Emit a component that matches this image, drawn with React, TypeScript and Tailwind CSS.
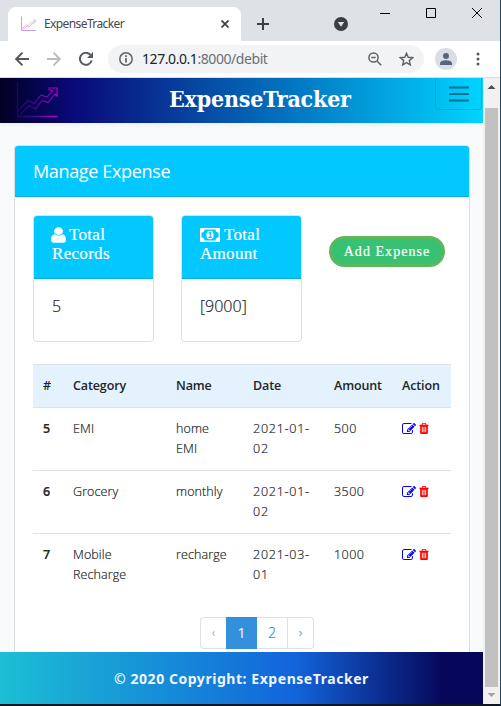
import React from "react";

const EDIT =
  "M888 1184l116-116-152-152-116 116v56h96v96h56zm440-720q-16-16-33 1l-350 350q-17 17-1 33t33-1l350-350q17-17 1-33zm80 594v190q0 119-84.5 203.5t-203.5 84.5h-832q-119 0-203.5-84.5t-84.5-203.5v-832q0-119 84.5-203.5t203.5-84.5h832q63 0 117 25 15 7 18 23 3 17-9 29l-49 49q-14 14-32 8-23-6-45-6h-832q-66 0-113 47t-47 113v832q0 66 47 113t113 47h832q66 0 113-47t47-113v-126q0-13 9-22l64-64q15-15 35-7t20 29zm-96-738l288 288-672 672h-288v-288zm444 132l-92 92-288-288 92-92q28-28 68-28t68 28l152 152q28 28 28 68t-28 68z";
const TRASH =
  "M704 1376v-704q0-14-9-23t-23-9h-64q-14 0-23 9t-9 23v704q0 14 9 23t23 9h64q14 0 23-9t9-23zm256 0v-704q0-14-9-23t-23-9h-64q-14 0-23 9t-9 23v704q0 14 9 23t23 9h64q14 0 23-9t9-23zm256 0v-704q0-14-9-23t-23-9h-64q-14 0-23 9t-9 23v704q0 14 9 23t23 9h64q14 0 23-9t9-23zm-544-992h448l-48-117q-7-9-17-11h-317q-10 2-17 11zm928 32v64q0 14-9 23t-23 9h-96v948q0 83-47 143.5t-113 60.5h-832q-66 0-113-58.5t-47-141.5v-952h-96q-14 0-23-9t-9-23v-64q0-14 9-23t23-9h309l70-167q15-37 54-63t79-26h320q40 0 79 26t54 63l70 167h309q14 0 23 9t9 23z";
const USER =
  "M1536 1399q0 109-62.5 187t-150.5 78h-854q-88 0-150.5-78t-62.5-187q0-85 8.5-160.5t31.5-152 58.5-131 94-89 134.5-34.5q131 128 313 128t313-128q76 0 134.5 34.5t94 89 58.5 131 31.5 152 8.5 160.5zm-256-887q0 159-112.5 271.5t-271.5 112.5-271.5-112.5-112.5-271.5 112.5-271.5 271.5-112.5 271.5 112.5 112.5 271.5z";

function ChartLogo() {
  return (
    <svg width="42" height="36" viewBox="0 0 42 36" fill="none" className="block">
      <defs>
        <linearGradient id="logo" gradientUnits="userSpaceOnUse" x1="0" y1="0" x2="42" y2="0">
          <stop offset="0" stopColor="#16085c" />
          <stop offset="0.45" stopColor="#45079a" />
          <stop offset="1" stopColor="#c800c4" />
        </linearGradient>
      </defs>
      <path d="M1.500 0V34.500H41.500" stroke="url(#logo)" strokeWidth="1.300" />
      <path
        d="M2 29L12 18.500L18.500 21.500L25 13L31 15L36.500 8.500L33 7.500V6H41V14L39 12L32 20.500L26 18.500L19.500 27L13 23.500L4 33"
        stroke="url(#logo)"
        strokeWidth="1.100"
      />
    </svg>
  );
}

function TabStrip() {
  return (
    <div className="flex h-[41px] items-end bg-[#dee1e6] pl-2">
      <div className="flex h-[34px] w-[233px] items-center rounded-t-lg bg-white pl-3 pr-3">
        <svg width="17" height="16" viewBox="0 0 17 16" fill="none">
          <path d="M1.500 0.500V14.500H16" stroke="#b9a5e6" />
          <path d="M2 13L6 8.500L8 10L11 6.500L15 5.500M3 13.500L7 10L9 11L12 8L15.500 6V4H13" stroke="#f0b4f0" strokeWidth="1" />
        </svg>
        <span className="ml-[7px] font-['Noto_Sans','Open_Sans',sans-serif] text-[12px] leading-4 tracking-[-0.600px] text-[#45494d]">ExpenseTracker</span>
        <svg className="ml-auto" width="8" height="8" viewBox="0 0 8 8" stroke="#3c4043" strokeWidth="1.700">
          <path d="M0.500 0.500L7.500 7.500M7.500 0.500L0.500 7.500" />
        </svg>
      </div>
      <svg className="mb-[11px] ml-4" width="12" height="12" viewBox="0 0 12 12" stroke="#3c4043" strokeWidth="2">
        <path d="M6 0V12M0 6H12" />
      </svg>
      <svg className="mb-[10px] ml-[65px]" width="14" height="14" viewBox="0 0 14 14">
        <circle cx="7" cy="7" r="7" fill="#3c4043" />
        <path d="M3.800 5H10.200L7 9.800Z" fill="#dee1e6" />
      </svg>
      <div className="ml-8 flex h-[41px] gap-9 pt-2">
        <svg width="10" height="10" stroke="#000"><path d="M0 5.500H10" /></svg>
        <svg width="10" height="10" stroke="#000" fill="none"><path d="M0.500 0.500H9.500V9.500H0.500Z" /></svg>
        <svg width="10" height="10" stroke="#000"><path d="M0 0L10 10M10 0L0 10" /></svg>
      </div>
    </div>
  );
}

function Toolbar() {
  return (
    <div className="flex h-[37px] items-center border-b border-[#dcdcdc] bg-white pl-[15px]">
      <svg width="14" height="14" viewBox="0 0 14 14" fill="none" stroke="#55595e" strokeWidth="1.900">
        <path d="M14 7H1.500M7.500 0.700L1.200 7L7.500 13.300" />
      </svg>
      <svg className="ml-[18px]" width="14" height="14" viewBox="0 0 14 14" fill="none" stroke="#babcbe" strokeWidth="1.900">
        <path d="M0 7H12.500M6.500 0.700L12.800 7L6.500 13.300" />
      </svg>
      <svg className="ml-[18px]" width="14" height="14" viewBox="0 0 14 14" fill="none" stroke="#55595e" strokeWidth="2">
        <path d="M12.700 8.500A6 6 0 1 1 11.300 2.700" />
        <path d="M14 0V6H8Z" fill="#55595e" stroke="none" />
      </svg>
      <div className="ml-[15px] flex h-7 w-[316px] items-center rounded-full bg-[#f1f3f4] pl-[11px] pr-[10px]">
        <svg width="14" height="14" viewBox="0 0 14 14" fill="none" stroke="#5f6368" strokeWidth="1.500">
          <circle cx="7" cy="7" r="6.200" />
          <path d="M7 6V10.500M7 3.300V4.900" strokeWidth="1.700" />
        </svg>
        <span className="ml-[9px] whitespace-nowrap font-['Noto_Sans','Open_Sans',sans-serif] text-[14px] leading-5 tracking-[-0.430px] text-[#6b7075]">
          <span className="text-[#202124]">127.0.0.1</span>:8000/debit
        </span>
        <svg className="ml-auto" width="14" height="14" viewBox="0 0 14 14" fill="none" stroke="#5f6368" strokeWidth="1.500">
          <circle cx="5.500" cy="5.500" r="4.600" />
          <path d="M9 9L13.200 13.200M3.300 5.500H7.700" />
        </svg>
        <svg className="ml-[17px]" width="15" height="14" viewBox="0 0 15 14" fill="none" stroke="#5f6368" strokeWidth="1.400">
          <path d="M7.500 1.300L9.200 5.300L13.600 5.700L10.300 8.600L11.300 12.900L7.500 10.600L3.700 12.900L4.700 8.600L1.400 5.700L5.800 5.300Z" />
        </svg>
      </div>
      <div className="ml-[11px] flex size-[22px] items-center justify-center rounded-full bg-[#dadde3]">
        <svg width="12" height="12" viewBox="0 0 12 12" fill="#5a6478">
          <circle cx="6" cy="3" r="3" />
          <path d="M0 12V10.300C0 8 4 7.200 6 7.200S12 8 12 10.300V12Z" />
        </svg>
      </div>
      <svg className="ml-[19px]" width="4" height="14" viewBox="0 0 4 14" fill="#55595e">
        <circle cx="2" cy="2" r="1.500" />
        <circle cx="2" cy="7" r="1.500" />
        <circle cx="2" cy="12" r="1.500" />
      </svg>
    </div>
  );
}

function Navbar() {
  return (
    <div className="flex h-[45px] shrink-0 items-start bg-[linear-gradient(90deg,#020024_0%,#090979_15%,#00d4ff_100%)] pl-4 shadow-[0_2px_4px_rgba(0,0,0,0.05)]">
      <div className="pt-1"><ChartLogo /></div>
      <h1 className="ml-[111px] w-[187px] whitespace-nowrap pt-1 font-['DejaVu_Serif_Condensed','DejaVu_Serif',serif] text-[23px] font-bold leading-[34px] tracking-[-0.200px] text-white [font-stretch:condensed]">
        ExpenseTracker
      </h1>
      <div className="ml-[79px] flex h-8 w-[47px] items-center justify-center rounded-b border border-t-0 border-[#00add8]">
        <svg width="20" height="16" viewBox="0 0 20 16" stroke="#036f91" strokeWidth="2">
          <path d="M0 1.500H20M0 8H20M0 14.500H20" />
        </svg>
      </div>
    </div>
  );
}

function Money() {
  return (
    <svg className="mr-1 inline-block align-[-1px]" width="20" height="14" viewBox="0 0 20 14">
      <path
        fill="#fff"
        fillRule="evenodd"
        d="M0 0H20V14H0ZM4.500 1.500A3 3 0 0 1 1.500 4.500V9.500A3 3 0 0 1 4.500 12.500H15.500A3 3 0 0 1 18.500 9.500V4.500A3 3 0 0 1 15.500 1.500Z"
      />
      <ellipse cx="10" cy="7" rx="3.600" ry="4.300" fill="#fff" />
      <path d="M8.500 5.500L10.300 4.300V9.300M8.300 9.300H11.900" fill="none" stroke="#03c8ff" strokeWidth="1.200" />
    </svg>
  );
}

function StatCard({ icon, first, second, value }: { icon: React.ReactNode; first: string; second: string; value: string }) {
  return (
    <div className="h-[127px] w-[121px] overflow-hidden rounded border border-[#dfdfdf]">
      <div className="h-[63px] border-b border-[#05b1e0] bg-[#03c8ff] pl-[18px] pt-[10px] font-['Liberation_Serif',serif] text-[17px] leading-[18px] tracking-[0.300px] text-white [-webkit-text-stroke:0.200px_white]">
        <div className="flex h-[18px] items-center whitespace-nowrap">{icon}<span>{first}</span></div>
        <div className="pt-px">{second}</div>
      </div>
      <div className="pl-[18px] pt-[15px] text-[16px] font-light leading-6 text-[#212529] [-webkit-text-stroke:0.200px_#212529]">{value}</div>
    </div>
  );
}

const rows = [
  ["5", ["EMI"], ["home", "EMI"], ["2021-01-", "02"], "500"],
  ["6", ["Grocery"], ["monthly"], ["2021-01-", "02"], "3500"],
  ["7", ["Mobile", "Recharge"], ["recharge"], ["2021-03-", "01"], "1000"],
] as [string, string[], string[], string[], string][];

const grid = "grid grid-cols-[30px_103px_77px_81px_68px_59px] border-t border-[#dee2e6] pl-[10px]";

function Lines({ items }: { items: string[] }) {
  return <div>{items.map((t) => <div key={t}>{t}</div>)}</div>;
}

function ExpenseTable() {
  return (
    <div className="mt-[22px] w-[418px] overflow-hidden text-[12.500px] leading-5 text-[#212529]">
      <div className={grid + " h-[43px] bg-[#e3f2fd] pt-[11px] font-semibold tracking-[-0.120px]"}>
        <div>#</div><div>Category</div><div>Name</div><div>Date</div><div>Amount</div><div>Action</div>
      </div>
      {rows.map(([id, cat, name, date, amount]) => (
        <div key={id} className={grid + " h-[63px] pt-[10.500px] font-light [-webkit-text-stroke:0.200px_#212529]"}>
          <div className="font-semibold">{id}</div>
          <div className="tracking-[0.100px]"><Lines items={cat} /></div>
          <div className="tracking-[0.100px]"><Lines items={name} /></div>
          <div className="tracking-[0.750px]"><Lines items={date} /></div>
          <div className="tracking-[0.450px]">{amount}</div>
          <div className="flex gap-[2px] pt-[3.500px]">
            <svg width="14" height="14" viewBox="0 0 1792 1792" fill="#0000ff"><path d={EDIT} /></svg>
            <svg width="12" height="13" viewBox="0 0 1792 1792" fill="#ff0000" preserveAspectRatio="none"><path d={TRASH} /></svg>
          </div>
        </div>
      ))}
    </div>
  );
}

function Pagination() {
  return (
    <div className="ml-[167px] mt-[21px] flex h-8 w-[114px] text-center text-[14px] font-light leading-[30px] text-[#3490dc]">
      <div className="w-[26px] rounded-l border border-r-0 border-[#dee2e6] text-[12px] text-[#6c757d]">‹</div>
      <div className="w-[31px] bg-[#3490dc] font-normal leading-8 text-white">1</div>
      <div className="w-[31px] border border-l-0 border-[#dee2e6] [-webkit-text-stroke:0.200px_#3490dc]">2</div>
      <div className="w-[26px] rounded-r border border-l-0 border-[#dee2e6] text-[12px] [-webkit-text-stroke:0.200px_#3490dc]">›</div>
    </div>
  );
}

function Scrollbar() {
  return (
    <div className="flex w-[17px] shrink-0 flex-col items-center bg-[#f1f1f1]">
      <svg width="17" height="30" viewBox="0 0 17 30"><path d="M4.500 11L8.500 7L12.500 11Z" fill="#505050" /></svg>
      <div className="h-[579px] w-[13px] bg-[#c1c1c1]" />
      <svg width="17" height="17" viewBox="0 0 17 17"><path d="M4.500 6L8.500 10L12.500 6Z" fill="#a3a3a3" /></svg>
    </div>
  );
}

export default function App() {
  return (
    <div className="h-[706px] w-[501px] overflow-hidden border-b-2 border-r border-b-[#101722] border-r-[#27465e] font-['Open_Sans','Noto_Sans',sans-serif]">
      <TabStrip />
      <Toolbar />
      <div className="flex h-[626px]">
        <div className="flex w-[483px] flex-col bg-[#f8fafc]">
          <Navbar />
          <div className="ml-[14px] mr-[13px] mt-[22px] h-[507px] overflow-hidden rounded-t border border-b-0 border-[#dcdfe2] bg-white">
            <div className="h-[51px] border-b border-[#05b1e0] bg-[#03c8ff] pl-[18px] pt-[11px] text-[18px] leading-7 tracking-[-0.350px] text-white">
              Manage Expense
            </div>
            <div className="pl-[18px] pt-[18px]">
              <div className="flex">
                <StatCard
                  icon={<svg className="-ml-px mr-[3px]" width="15" height="18" viewBox="256 0 1280 1792" preserveAspectRatio="none" fill="#fff"><path d={USER} /></svg>}
                  first="Total"
                  second="Records"
                  value="5"
                />
                <div className="ml-[27px]">
                  <StatCard icon={<Money />} first="Total" second="Amount" value="[9000]" />
                </div>
                <button className="ml-[27px] mt-[21px] h-[31px] w-[116px] whitespace-nowrap rounded-full border-[3px] border-[#5cb85c] bg-[#38c172] font-['Liberation_Serif',serif] text-[14px] leading-[24px] tracking-[1.050px] text-white [-webkit-text-stroke:0.200px_white]">
                  Add Expense
                </button>
              </div>
              <ExpenseTable />
              <Pagination />
            </div>
          </div>
          <div className="flex h-[52px] shrink-0 items-center justify-center bg-[linear-gradient(90deg,#1cbfd4_0%,#1264db_61%,#06065a_92%,#06065a_100%)] font-['Noto_Sans','Open_Sans',sans-serif] text-[14px] font-bold tracking-[0.550px] text-[#f0f5ff]">
            <span className="whitespace-nowrap">© 2020 Copyright: ExpenseTracker</span>
          </div>
        </div>
        <Scrollbar />
      </div>
    </div>
  );
}
